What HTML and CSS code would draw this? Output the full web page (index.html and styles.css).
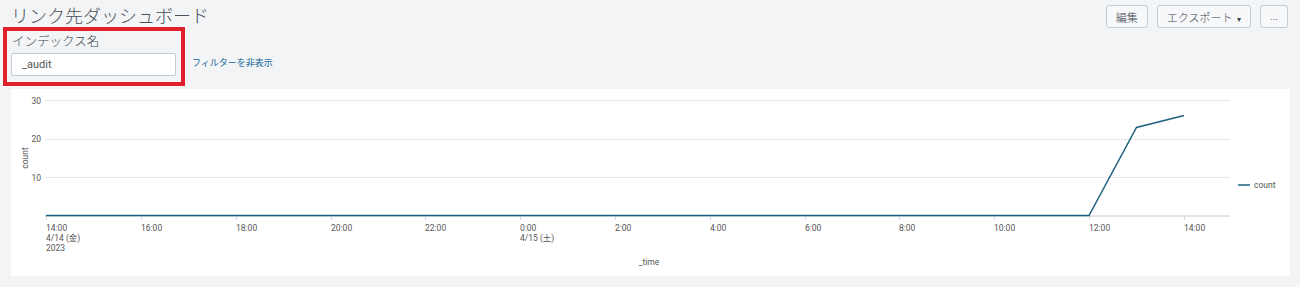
FILE: index.html
```html
<!DOCTYPE html>
<html lang="ja">
<head>
    <meta charset="utf-8">
    <link rel="stylesheet" href="styles.css">
</head>
<body>
    <header class="dash-head">
        <h1 class="dash-title">リンク先ダッシュボード</h1>
        <div class="dash-actions">
            <button class="btn">編集</button>
            <button class="btn">エクスポート <span class="caret">▾</span></button>
            <button class="btn">...</button>
        </div>
    </header>

    <div class="filters">
        <div class="field">
            <label class="field-label">インデックス名</label>
            <input class="field-input" value="_audit">
        </div>
        <a class="hide-filters" href="#">フィルターを非表示</a>
    </div>

    <section class="panel">
        <svg class="chart" width="1279" height="187" viewBox="0 0 1279 187">
            <!-- grid -->
            <g class="grid">
                <line x1="34" y1="11.5" x2="1219" y2="11.5" />
                <line x1="34" y1="50.5" x2="1219" y2="50.5" />
                <line x1="34" y1="88.5" x2="1219" y2="88.5" />
            </g>
            <line class="axis" x1="34" y1="127" x2="1219" y2="127" />

            <g class="y-labels">
                <text x="30" y="15">30</text>
                <text x="30" y="53">20</text>
                <text x="30" y="92">10</text>
            </g>
            <text class="axis-title" transform="translate(17 69) rotate(-90)">count</text>

            <g class="ticks">
                <line x1="35.5" y1="127" x2="35.5" y2="131" />
                <line x1="130.5" y1="127" x2="130.5" y2="131" />
                <line x1="225.5" y1="127" x2="225.5" y2="131" />
                <line x1="320.5" y1="127" x2="320.5" y2="131" />
                <line x1="414.5" y1="127" x2="414.5" y2="131" />
                <line x1="509.5" y1="127" x2="509.5" y2="131" />
                <line x1="604.5" y1="127" x2="604.5" y2="131" />
                <line x1="699.5" y1="127" x2="699.5" y2="131" />
                <line x1="794.5" y1="127" x2="794.5" y2="131" />
                <line x1="888.5" y1="127" x2="888.5" y2="131" />
                <line x1="983.5" y1="127" x2="983.5" y2="131" />
                <line x1="1078.5" y1="127" x2="1078.5" y2="131" />
                <line x1="1173.5" y1="127" x2="1173.5" y2="131" />
            </g>

            <g class="x-labels">
                <text x="35" y="142">14:00</text>
                <text x="35" y="152">4/14 (金)</text>
                <text x="35" y="162">2023</text>
                <text x="130" y="142">16:00</text>
                <text x="225" y="142">18:00</text>
                <text x="320" y="142">20:00</text>
                <text x="414" y="142">22:00</text>
                <text x="509" y="142">0:00</text>
                <text x="509" y="152">4/15 (土)</text>
                <text x="604" y="142">2:00</text>
                <text x="699" y="142">4:00</text>
                <text x="794" y="142">6:00</text>
                <text x="888" y="142">8:00</text>
                <text x="983" y="142">10:00</text>
                <text x="1078" y="142">12:00</text>
                <text x="1173" y="142">14:00</text>
            </g>
            <text class="axis-title" x="638" y="176">_time</text>

            <polyline class="series" points="35,126.5 1078,126.5 1125.5,38.5 1173,26.5" />

            <line class="series" x1="1227" y1="96" x2="1239" y2="96" />
            <text class="legend" x="1243" y="99">count</text>
        </svg>
    </section>
</body>
</html>
```

FILE: styles.css
```css
body {
    margin: 0;
    padding: 0 12px 0 11px;
    background: #f2f4f5;
    font-family: Roboto, 'Noto Sans CJK JP', sans-serif;
    color: #3c444d;
}

.dash-head {
    display: flex;
    justify-content: space-between;
    align-items: flex-start;
    height: 27px;
}

.dash-title {
    margin: 0;
    padding-top: 6px;
    font-size: 18px;
    font-weight: 300;
    line-height: 21px;
    color: #4a5058;
}

.dash-actions {
    display: flex;
    gap: 9px;
    padding-top: 5px;
}

.btn {
    height: 23px;
    padding: 0 9px;
    border: 1px solid #c3cbd4;
    border-radius: 3px;
    background: #f7f8fa;
    font-family: Roboto, 'Noto Sans CJK JP', sans-serif;
    font-size: 11px;
    font-weight: 300;
    color: #3c444d;
}

.btn .caret {
    font-size: 8px;
    margin-left: 2px;
}

.filters {
    display: flex;
    align-items: center;
}

.field {
    display: flex;
    flex-direction: column;
    margin-left: -8px;
    padding: 3px 5px 6px 4px;
    border: 4px solid #e0202b;
}

.field-label {
    font-size: 12.5px;
    font-weight: 300;
    line-height: 16px;
    margin-left: 1px;
}

.field-input {
    width: 143px;
    height: 21px;
    margin: 0;
    margin-top: 3px;
    padding: 0 10px;
    border: 1px solid #c3cbd4;
    border-radius: 2px;
    background: #fff;
    font-family: Roboto, sans-serif;
    font-size: 11px;
    color: #555;
}

.hide-filters {
    margin-left: 7px;
    margin-top: 12px;
    font-size: 9px;
    color: #1a6a9e;
    text-decoration: none;
}

.panel {
    margin-top: 3px;
    width: 1279px;
    height: 187px;
    background: #fff;
}

.chart {
    display: block;
    font-family: Roboto, 'Noto Sans CJK JP', sans-serif;
}

.grid line {
    stroke: #e4e7ea;
    stroke-width: 1;
}

.axis {
    stroke: #c8cdd2;
    stroke-width: 1;
}

.ticks line {
    stroke: #d5d9dd;
    stroke-width: 1;
}

.y-labels text {
    font-size: 8.5px;
    fill: #555;
    text-anchor: end;
}

.x-labels text {
    font-size: 8.5px;
    fill: #555;
}

.axis-title {
    font-size: 8.5px;
    fill: #555;
    text-anchor: middle;
}

.series {
    fill: none;
    stroke: #1f6280;
    stroke-width: 1.5;
}

.legend {
    font-size: 8.5px;
    fill: #555;
}
```
